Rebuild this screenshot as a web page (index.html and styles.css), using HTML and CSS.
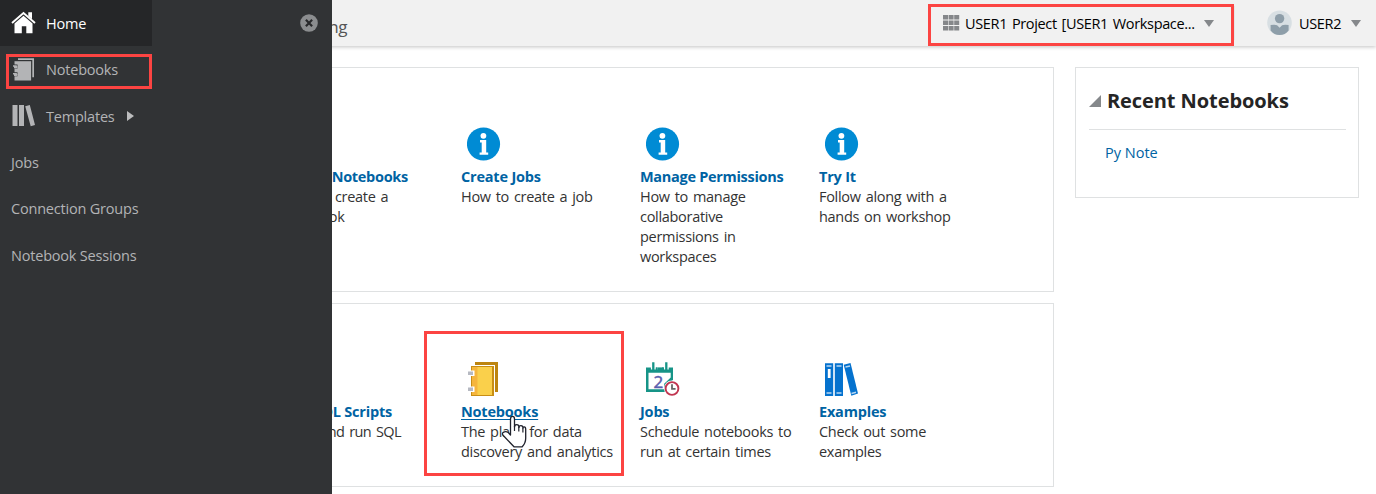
FILE: index.html
```html
<!DOCTYPE html>
<html lang="en">
<head>
<meta charset="utf-8">
<title>Machine Learning</title>
<link rel="stylesheet" href="styles.css">
</head>
<body>
<svg class="defs" width="0" height="0">
  <symbol id="info" viewBox="0 0 34 34"><circle cx="16.500" cy="17" r="16.600" fill="#008bd4"/><circle cx="16.400" cy="8.800" r="2.900" fill="#fff"/><path d="M13 13h6.200v12.400h2v2.300h-8.600v-2.300h2.100v-10H13z" fill="#fff"/></symbol>
</svg>
<div class="app">
  <header class="topbar">
    <div class="brand">Machine Learning</div>
    <div class="project">
      <svg width="17" height="16" viewBox="0 0 17 16" fill="#85878a"><path d="M0 0h5v4.600H0zM5.600 0h5v4.600h-5zM11.200 0h5v4.600h-5zM0 5.500h5v4.600H0zM5.600 5.500h5v4.600h-5zM11.200 5.500h5v4.600h-5zM0 11h5v4.600H0zM5.600 11h5v4.600h-5zM11.200 11h5v4.600h-5z"/></svg>
      <span class="project-name">USER1 Project [USER1 Workspace...</span>
      <i class="caret"></i>
    </div>
    <div class="user">
      <svg width="26" height="26" viewBox="0 0 26 26"><circle cx="12.500" cy="12.800" r="12.300" fill="#d8dfe3"/><circle cx="12.600" cy="8.600" r="4.700" fill="#8e9ea9"/><path d="M3.600 15q4.400-.8 6.500.2l2.500 2.600 2.500-2.600q2.400-1 6.500-.2v5.600q-3.500 4.500-9 4.500t-9-4.500z" fill="#8e9ea9"/></svg>
      <span class="user-name">USER2</span>
      <i class="caret"></i>
    </div>
  </header>
  <div class="content">
    <main class="panels">
      <section class="panel howto">
        <article class="card"><svg class="icon" width="34" height="34"><use href="#info"/></svg><h3 class="tight">Create Notebooks</h3><p>How to create a<br>notebook</p></article>
        <article class="card"><svg class="icon" width="34" height="34"><use href="#info"/></svg><h3>Create Jobs</h3><p>How to create a job</p></article>
        <article class="card"><svg class="icon" width="34" height="34"><use href="#info"/></svg><h3 class="tight">Manage Permissions</h3><p>How to manage<br>collaborative<br>permissions in<br>workspaces</p></article>
        <article class="card"><svg class="icon" width="34" height="34"><use href="#info"/></svg><h3>Try It</h3><p>Follow along with a<br>hands on workshop</p></article>
      </section>
      <section class="panel actions">
        <article class="card"><svg class="icon" width="34" height="34"></svg><h3>Run SQL Scripts</h3><p class="narrow">Write and run SQL</p></article>
        <article class="card"><svg class="icon" width="34" height="34" viewBox="0 0 34 34"><path d="M8 0h23v30h-3.500V3H8z" fill="#bd8510"/><path d="M27 3h1v28h-1z" fill="#fff"/><path d="M4 4h23v30H4z" fill="#c88e15"/><path d="M5 5h6v28H5z" fill="#f5b53c"/><path d="M10.500 5H25v28H10.500z" fill="#fad04b"/><path d="M2 8.500h5.500v5.500H2zM2 24.500h5.500V30H2z" fill="#fff"/><path d="M1 9.500h5v3.600H1zM1 25.500h5v3.600H1z" fill="#b6b9c2"/></svg><h3><a class="hovered">Notebooks</a></h3><p>The place for data<br>discovery and analytics</p></article>
        <article class="card"><svg class="icon" width="34" height="34" viewBox="0 0 34 34" fill="none"><path d="M0 5.400h27v12L19 30H0z" fill="#169487"/><path d="M2.500 10.800h22.200v4.700l-6.500 6.200v5.600H2.500z" fill="#fff"/><path d="M4.900 0h4.800v7.500H4.900zM11.200 0H16v7.500h-4.800zM17.900 0h4.800v7.500h-4.800z" fill="#fff"/><path d="M10 5.400h1.500v4H10zM16 5.400h2v4h-2z" fill="#169487"/><path d="M7.300.2v8M20.300.2v8" stroke="#169487" stroke-width="2.300"/><path d="M11.500 5.400h5V9h-5z" fill="#169487"/><text x="7.500" y="25.500" class="cal-number">2</text><circle cx="26" cy="26.500" r="8" fill="#fff"/><circle cx="26" cy="26.500" r="6.400" stroke="#c13650" stroke-width="1.900"/><path d="M26 22.300v4.600h3.600" stroke="#666" stroke-width="1.800"/></svg><h3>Jobs</h3><p>Schedule notebooks to<br>run at certain times</p></article>
        <article class="card"><svg class="icon" width="34" height="34" viewBox="0 0 34 34"><g transform="translate(-1)"><g fill="#0572ce"><path d="M1 1.200h8.200V34H1zM10.800 1.200H19V34h-8.200z"/><path d="M19.700 2.800 26.500.9 34 31.500l-6.700 2.200z"/></g><g stroke="#b9d8f3" stroke-width="1.500"><path d="M2.500 4h5M2.500 31h5M12.500 4h5M12.500 31h5M21.500 5l4.500-1M27.500 31.500l4.500-1.200"/></g><path d="M3.800 7h2.800v9H3.800z" fill="#fff"/></g></svg><h3>Examples</h3><p>Check out some<br>examples</p></article>
      </section>
    </main>
    <aside class="recent">
      <h2><svg width="12" height="12" viewBox="0 0 12 12"><path d="M12 0v12H0z" fill="#85888b"/></svg><span>Recent Notebooks</span></h2>
      <a class="note">Py Note</a>
    </aside>
  </div>
  <nav class="drawer">
    <a class="nav-item active"><svg width="26" height="24" viewBox="0 0 26 24"><path d="M17.300 5V1.300H21v7z" fill="#fff"/><path d="M1 12 12.500 2 24 12" fill="none" stroke="#fff" stroke-width="1.900"/><path d="M12.500 4.800 21.500 12.500V22.300h-6.200v-7h-4.500v7H3.500v-9.800z" fill="#fff"/></svg><span>Home</span></a>
    <a class="nav-item"><svg width="26" height="24" viewBox="0 0 26 24"><g fill="#b3b4b6"><path d="M7 .3h16v19h-1.700V2H7z"/><path d="M3.500 3.200h16.600v19.300H3.500z"/></g><path d="M3 6.600h3.500v4H3zM3 14.300h3.500v4H3z" fill="#313335"/><path d="M2 8h3.200q1.300 1.600 0 1.600H3M2 15.700h3.200q1.300 1.600 0 1.600H3" fill="none" stroke="#b3b4b6" stroke-width="1.500"/></svg><span>Notebooks</span></a>
    <a class="nav-item templates"><svg width="26" height="24" viewBox="0 0 26 24" fill="#b3b4b6"><path d="M1.500 1h5v21h-5zM8 1h5v21H8zM14.200 2.200 18.800.9l5.200 20-4.300 1.300z"/></svg><span>Templates</span><i class="expand"></i></a>
    <a class="nav-item">Jobs</a>
    <a class="nav-item">Connection Groups</a>
    <a class="nav-item">Notebook Sessions</a>
    <svg class="close" width="18" height="18" viewBox="0 0 18 18"><circle cx="9" cy="9" r="8.800" fill="#8b8d8f"/><path d="m5.900 5.800 6.200 6.400m0-6.400-6.200 6.400" stroke="#28292b" stroke-width="2.200"/></svg>
  </nav>
  <div class="mark mark-nav"></div>
  <div class="mark mark-project"></div>
  <div class="mark mark-card"></div>
  <svg class="cursor" width="28" height="34" viewBox="0 0 28 34"><path d="M9.500 20V4q0-2.600 2-2.600t2 2.600v8q0-2.300 2.200-2.300 2.300 0 2.300 2.700 0-1.700 1.900-1.700 2.100 0 2.100 2.300 0-1.200 1.200-1.200 1.500 0 1.500 2.500v9q0 4.800-3.500 8.500h-8.200L3 21.300q-2.700-2.500-.7-4 2.500-1.300 5 .2z" fill="#fff" stroke="#20222c" stroke-width="1.300" stroke-linejoin="round"/><path d="M13.500 11v5M17.800 12v4.500M21.900 13v4.500" stroke="#20222c" stroke-width="1.200"/></svg>
</div>
</body>
</html>
```
FILE: styles.css
```css
* { box-sizing: border-box; }
body { margin: 0; background: #fff; font-family: "Open Sans", "Noto Sans", sans-serif; font-size: 14.5px; color: #333; }
.defs { position: absolute; }
.app { position: relative; width: 1376px; height: 494px; overflow: hidden; }
h2, h3, p { margin: 0; }

.topbar { display: flex; align-items: center; height: 46px; background: #f1f1f1; box-shadow: 0 1px 4px rgba(0, 0, 0, .24); color: #000; }
.brand { width: 347px; padding-top: 6px; font-size: 17px; text-align: right; color: #555; letter-spacing: -.4px; }
.project { display: flex; align-items: center; width: 292px; height: 34px; margin-left: 596px; border-right: 1px solid #e6e6e6; }
.project-name { width: 230px; margin-left: 5px; white-space: nowrap; letter-spacing: -.35px; word-spacing: 1.4px; }
.caret { width: 0; height: 0; border: 5px solid transparent; border-top: 7px solid #85888b; border-bottom: 0; margin-left: 9px; }
.user { display: flex; align-items: center; margin-left: 32px; }
.user-name { width: 43px; margin-left: 6px; letter-spacing: -.35px; }

.content { display: flex; align-items: flex-start; padding: 21px 17px 0 20px; gap: 21px; }
.panels { display: flex; flex-direction: column; gap: 11px; width: 1034px; }
.panel { display: flex; border: 1px solid #dfe1e2; padding: 59px 0 0 261px; }
.howto { height: 225px; }
.actions { height: 184px; padding-top: 58px; }
.card { width: 179px; flex: none; line-height: 20px; white-space: nowrap; letter-spacing: -.3px; word-spacing: 1.5px; }
.icon { display: block; margin: 0 0 6px 6px; }
.card h3 { font-size: 14.5px; line-height: 20px; color: #0063a3; letter-spacing: -.2px; word-spacing: 0; }
.card .tight { letter-spacing: -.3px; }
.card .narrow { letter-spacing: -.55px; }
.hovered { text-decoration: underline; text-underline-offset: 2px; }
.cal-number { font: 17px "Open Sans", sans-serif; fill: #5a5fae; stroke: #5a5fae; stroke-width: .5px; }

.recent { width: 284px; height: 131px; border: 1px solid #dfe1e2; padding: 10px 12px 0 13px; }
.recent h2 { display: flex; align-items: center; gap: 6px; height: 52px; padding-bottom: 6px; border-bottom: 1px solid #dfe1e2; font-size: 20px; letter-spacing: -.08px; color: #252525; white-space: nowrap; }
.note { display: block; padding: 13px 0 0 16px; line-height: 20px; color: #0063a3; }

.drawer { position: absolute; left: 0; top: 0; width: 332px; height: 494px; background: #313335; color: #b3b4b6; }
.nav-item { display: flex; align-items: center; width: 152px; height: 46.4px; padding-left: 11px; white-space: nowrap; letter-spacing: -.2px; }
.nav-item svg { flex: none; margin-right: 9px; }
.active { background: #252628; color: #fff; }
.templates { padding-top: 1px; }
.expand { margin-left: 12px; border: 5.5px solid transparent; border-left: 7px solid #bcbdbe; border-right: 0; }
.close { position: absolute; left: 300px; top: 14px; }

.mark { position: absolute; border: 3px solid #fc4442; }
.mark-nav { left: 6px; top: 54px; width: 146px; height: 35px; }
.mark-project { left: 928px; top: 4px; width: 306px; height: 42px; }
.mark-card { left: 424px; top: 331px; width: 200px; height: 145px; }
.cursor { position: absolute; left: 501px; top: 415px; }
```
